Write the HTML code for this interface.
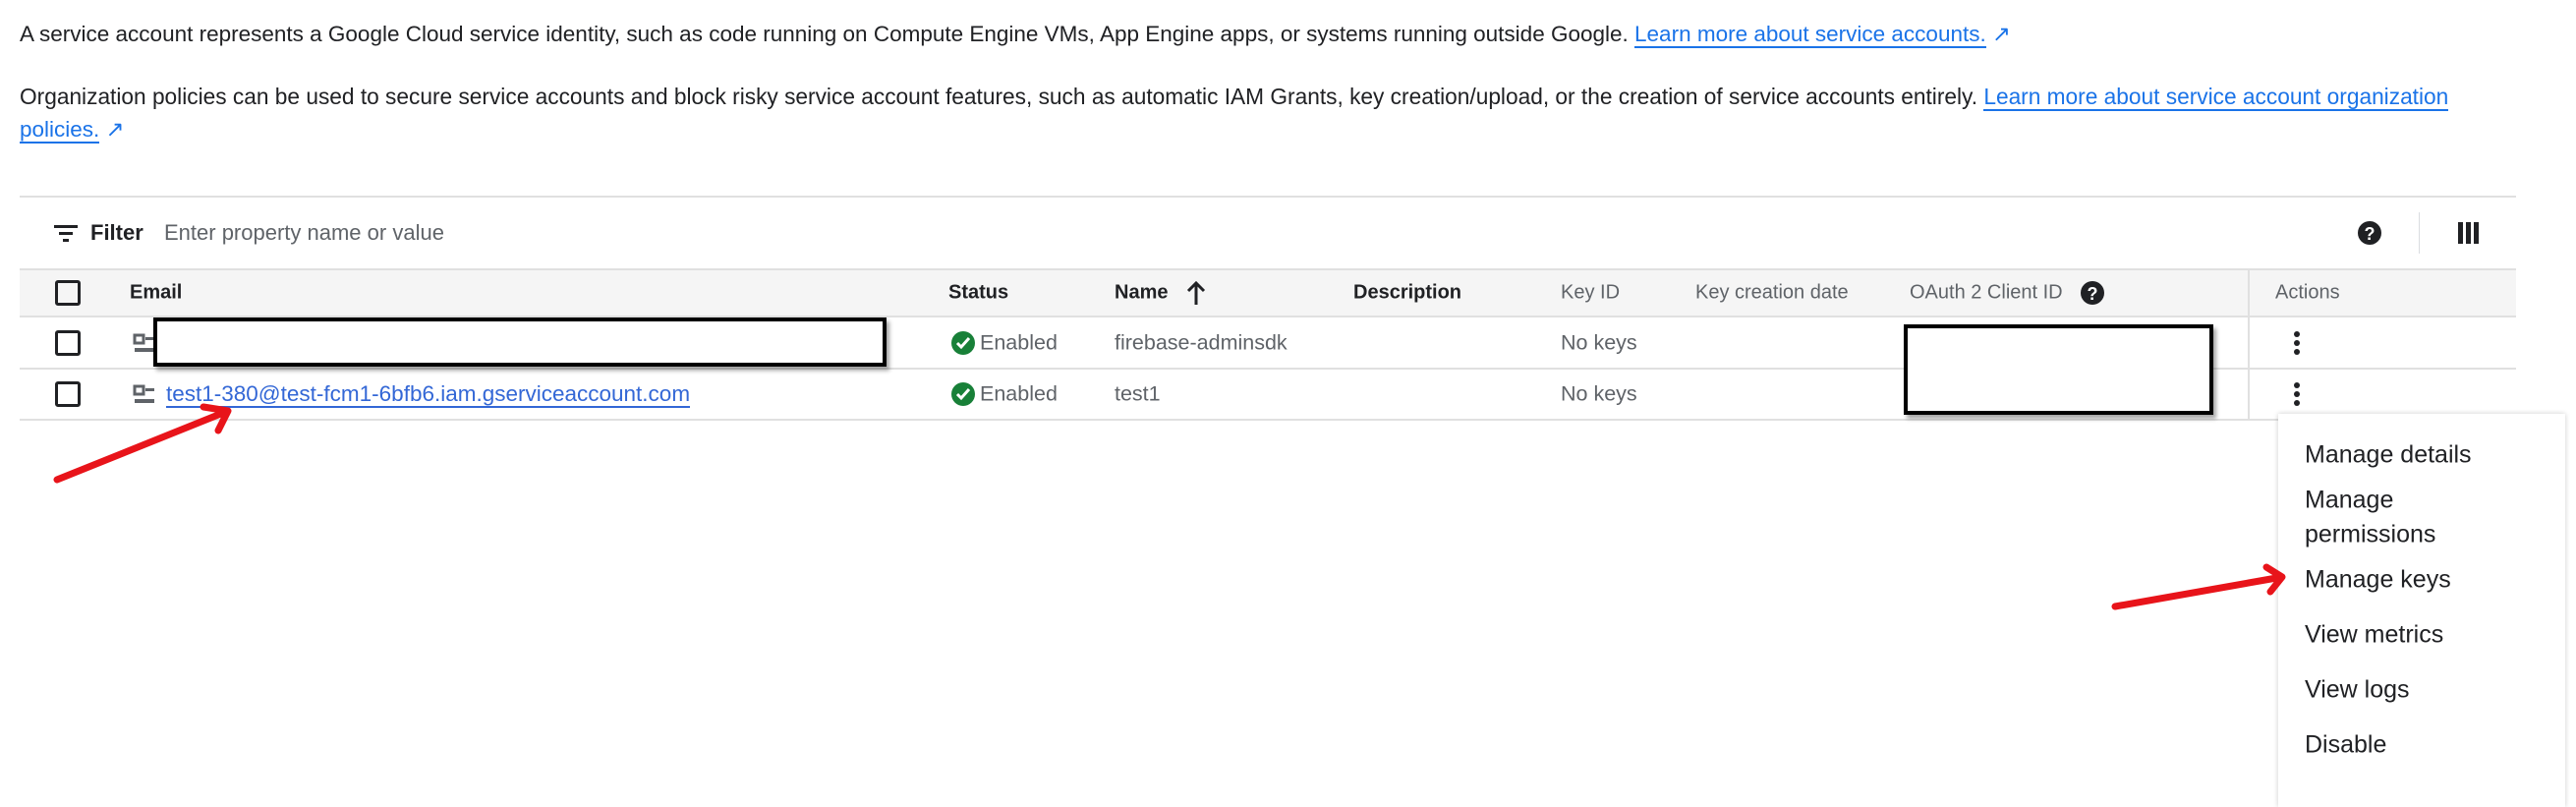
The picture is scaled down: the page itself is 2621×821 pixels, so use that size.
<!DOCTYPE html>
<html><head><meta charset="utf-8"><style>
*{margin:0;padding:0;box-sizing:border-box}
body{width:2621px;height:804px;background:#fff;font-family:"Liberation Sans",Arial,sans-serif;color:#202124;position:relative;overflow:hidden}
.a{position:absolute;white-space:nowrap}
.p{font-size:22.5px;line-height:34px}
a{color:#1a73e8;text-decoration:none;border-bottom:2px solid #1a73e8}
.h{font-size:21px;font-weight:bold;color:#202124;transform:translateY(-50%)}
.g{color:#5f6368}
.c{font-size:21.5px;transform:translateY(-50%)}
.cb{position:absolute;width:26px;height:26px;border:3px solid #202124;border-radius:3px}
.line{position:absolute;left:20px;width:2540px;height:2px;background:#e0e0e0}
.red{position:absolute;background:#fff;border:4px solid #000;box-shadow:3px 4px 4px rgba(0,0,0,.35)}
.mi{position:absolute;left:2345px;font-size:25px;transform:translateY(-50%);white-space:nowrap}
.kb{position:absolute;width:6px}
.kb i{display:block;width:6px;height:6px;border-radius:50%;background:#202124;margin-bottom:3px}
</style></head><body>
<div class="a p" style="left:20px;top:18px">A service account represents a Google Cloud service identity, such as code running on Compute Engine VMs, App Engine apps, or systems running outside Google. <a>Learn more about service accounts.</a> <span style="color:#1a73e8">&#x2197;</span></div>
<div class="a p" style="left:20px;top:81px;font-size:22.7px">Organization policies can be used to secure service accounts and block risky service account features, such as automatic IAM Grants, key creation/upload, or the creation of service accounts entirely. <a>Learn more about service account organization</a></div>
<div class="a p" style="left:20px;top:115px"><a>policies.</a> <span style="color:#1a73e8">&#x2197;</span></div>

<div class="line" style="top:199px"></div>
<svg class="a" style="left:55px;top:228px" width="26" height="20"><rect x="0" y="1" width="24" height="3" fill="#202124"/><rect x="5" y="8" width="14" height="3" fill="#202124"/><rect x="9" y="15" width="6" height="3" fill="#202124"/></svg>
<div class="a c" style="left:92px;top:237px;font-weight:bold;font-size:22px">Filter</div>
<div class="a c g" style="left:167px;top:237px;font-size:22px">Enter property name or value</div>
<svg class="a" style="left:2398px;top:224px" width="26" height="26"><circle cx="13" cy="13" r="12" fill="#202124"/><text x="13" y="20" font-size="18" font-weight="bold" fill="#fff" text-anchor="middle" font-family="Liberation Sans">?</text></svg>
<div class="a" style="left:2461px;top:216px;width:1px;height:42px;background:#dadce0"></div>
<svg class="a" style="left:2501px;top:226px" width="22" height="22"><rect x="0" y="0" width="5" height="22" fill="#202124"/><rect x="8" y="0" width="5" height="22" fill="#202124"/><rect x="16" y="0" width="5" height="22" fill="#202124"/></svg>

<div class="a" style="left:20px;top:273px;width:2540px;height:50px;background:#f5f5f5;border-top:2px solid #e0e0e0;border-bottom:2px solid #e0e0e0"></div>
<div class="a" style="left:2287px;top:273px;width:2px;height:154px;background:#e0e0e0"></div>
<div class="cb" style="left:56px;top:285px"></div>
<div class="a h" style="left:132px;top:298px;font-size:20px">Email</div>
<div class="a h" style="left:965px;top:298px;font-size:20px">Status</div>
<div class="a h" style="left:1134px;top:298px;font-size:20px">Name</div>
<svg class="a" style="left:1206px;top:284px" width="22" height="28"><path d="M11 26V4M3 12l8-8 8 8" stroke="#202124" stroke-width="3" fill="none"/></svg>
<div class="a h" style="left:1377px;top:298px;font-size:20px">Description</div>
<div class="a h g" style="left:1588px;top:298px;font-weight:normal;font-size:20px">Key ID</div>
<div class="a h g" style="left:1725px;top:298px;font-weight:normal;font-size:20px">Key creation date</div>
<div class="a h g" style="left:1943px;top:298px;font-weight:normal;font-size:20px">OAuth 2 Client ID</div>
<svg class="a" style="left:2116px;top:285px" width="26" height="26"><circle cx="13" cy="13" r="12" fill="#202124"/><text x="13" y="20" font-size="18" font-weight="bold" fill="#fff" text-anchor="middle" font-family="Liberation Sans">?</text></svg>
<div class="a h g" style="left:2315px;top:298px;font-weight:normal;font-size:20px">Actions</div>

<div class="line" style="top:374px"></div>
<div class="line" style="top:426px"></div>

<div class="cb" style="left:56px;top:336px"></div>
<div class="cb" style="left:56px;top:388px"></div>
<svg class="a" style="left:135px;top:339px" width="24" height="22"><rect x="2" y="2" width="9" height="8" stroke="#5f6368" stroke-width="3" fill="none"/><rect x="13" y="4" width="9" height="3" fill="#5f6368"/><rect x="2" y="15" width="20" height="4" fill="#5f6368"/></svg>
<svg class="a" style="left:135px;top:391px" width="24" height="22"><rect x="2" y="2" width="9" height="8" stroke="#5f6368" stroke-width="3" fill="none"/><rect x="13" y="4" width="9" height="3" fill="#5f6368"/><rect x="2" y="15" width="20" height="4" fill="#5f6368"/></svg>
<div class="red" style="left:156px;top:323px;width:746px;height:50px"></div>
<div class="a c" style="left:169px;top:401px;font-size:22.5px"><a style="color:#3367d6;border-color:#3367d6">test1-380@test-fcm1-6bfb6.iam.gserviceaccount.com</a></div>

<svg class="a" style="left:967px;top:336px" width="26" height="26"><circle cx="13" cy="13" r="12" fill="#188038"/><path d="M7 13l4 4 8-9" stroke="#fff" stroke-width="3" fill="none"/></svg>
<svg class="a" style="left:967px;top:388px" width="26" height="26"><circle cx="13" cy="13" r="12" fill="#188038"/><path d="M7 13l4 4 8-9" stroke="#fff" stroke-width="3" fill="none"/></svg>
<div class="a c g" style="left:997px;top:349px">Enabled</div>
<div class="a c g" style="left:997px;top:401px">Enabled</div>
<div class="a c g" style="left:1134px;top:349px">firebase-adminsdk</div>
<div class="a c g" style="left:1134px;top:401px">test1</div>
<div class="a c g" style="left:1588px;top:349px">No keys</div>
<div class="a c g" style="left:1588px;top:401px">No keys</div>
<div class="red" style="left:1937px;top:330px;width:315px;height:92px"></div>
<div class="kb" style="left:2334px;top:337px"><i></i><i></i><i></i></div>
<div class="kb" style="left:2334px;top:389px"><i></i><i></i><i></i></div>

<div class="a" style="left:2318px;top:421px;width:292px;height:400px;background:#fff;box-shadow:0 0 5px rgba(0,0,0,.2)"></div>
<div class="mi" style="top:463px">Manage details</div>
<div class="mi" style="top:509px">Manage</div>
<div class="mi" style="top:544px">permissions</div>
<div class="mi" style="top:590px">Manage keys</div>
<div class="mi" style="top:646px">View metrics</div>
<div class="mi" style="top:702px">View logs</div>
<div class="mi" style="top:758px">Disable</div>

<svg class="a" style="left:0;top:0" width="2621" height="804">
<g stroke="#e8141a" stroke-width="7" fill="none" stroke-linecap="round" stroke-linejoin="round">
<path d="M58 488L232 418M207 414L232 418 222 438"/>
<path d="M2152 617L2322 587M2306 577L2322 587 2310 602"/>
</g></svg>
</body></html>
